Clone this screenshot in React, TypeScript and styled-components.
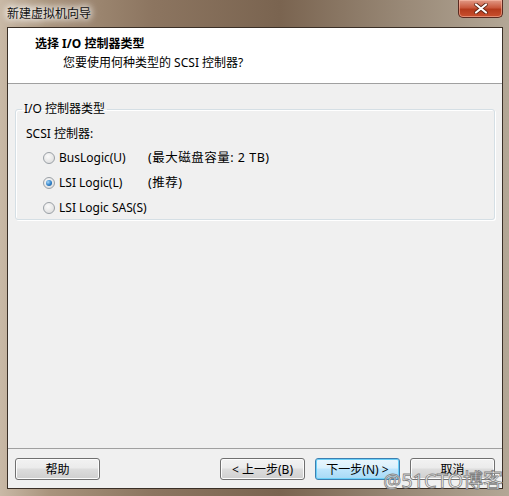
import React from 'react'
import styled, { createGlobalStyle } from 'styled-components'

const Global = createGlobalStyle`
  html, body {
    margin: 0;
    padding: 0;
    width: 509px;
    height: 496px;
    overflow: hidden;
    background: #6b5a4a;
  }
  * { box-sizing: border-box; }
`

const font = `"Noto Sans", "Noto Sans CJK SC", sans-serif`

const Window = styled.div`
  position: relative;
  width: 509px;
  height: 496px;
  display: flex;
  flex-direction: column;
  background: linear-gradient(90deg, #c9b9a6 0%, #a8937c 10%, #8c7560 30%, #7a6450 55%, #9a8a78 80%, #b3a796 100%);
  font-family: ${font};
`

const TitleBar = styled.div`
  height: 27px;
  display: flex;
  align-items: center;
  justify-content: space-between;
  padding: 0 6px 2px 7px;
`

const TitleText = styled.div`
  font-size: 12px;
  color: #111;
  text-shadow: 0 0 6px #fff, 0 0 8px #fff, 0 0 10px rgba(255, 255, 255, 0.9);
`

const CloseButton = styled.div`
  align-self: flex-start;
  width: 45px;
  height: 18px;
  border: 1px solid #5a2a20;
  border-top: none;
  border-radius: 0 0 5px 5px;
  background: linear-gradient(180deg, #e29a86 0%, #c9593d 45%, #b43a1c 55%, #c9502f 100%);
  display: flex;
  align-items: center;
  justify-content: center;
  box-shadow: inset 0 0 0 1px rgba(255, 200, 180, 0.5);
`

const Client = styled.div`
  flex: 1;
  margin: 0 6px 7px 7px;
  border: 1px solid #3a2f26;
  display: flex;
  flex-direction: column;
  background: #f0f0f0;
`

const Header = styled.div`
  height: 56px;
  background: #fff;
  border-bottom: 1px solid #a0a0a0;
  padding: 8px 0 0 27px;
`

const HeaderTitle = styled.div`
  font-size: 12px;
  font-weight: bold;
  color: #000;
  line-height: 16px;
`

const HeaderSub = styled.div`
  font-size: 12px;
  color: #000;
  line-height: 16px;
  margin: 3px 0 0 28px;
`

const Body = styled.div`
  flex: 1;
  padding: 18px 7px 0 7px;
`

const Group = styled.fieldset`
  margin: 0;
  height: 118px;
  border: 1px solid #d5dfe5;
  border-radius: 3px;
  padding: 0 0 0 10px;
  box-shadow: 1px 1px 0 #fff, inset 1px 1px 0 #fff;
`

const Legend = styled.legend`
  font-size: 12px;
  color: #000;
  padding: 0 2px 0 2px;
  margin-left: -4px;
  line-height: 14px;
`

const SubLabel = styled.div`
  font-size: 12px;
  color: #000;
  line-height: 16px;
  margin-top: 10px;
`

const Options = styled.div`
  display: grid;
  grid-template-columns: 105px auto;
  row-gap: 9px;
  margin: 8px 0 0 17px;
`

const Option = styled.label`
  display: flex;
  align-items: center;
  gap: 4px;
  font-size: 12px;
  color: #000;
  line-height: 16px;
`

const Note = styled.span`
  font-size: 12.5px;
  color: #000;
  line-height: 16px;
  letter-spacing: 0.5px;
`

const Radio = styled.span<{ $checked?: boolean }>`
  width: 12px;
  height: 12px;
  border-radius: 50%;
  border: 1px solid #9aa0a6;
  background: radial-gradient(circle at 40% 35%, #fafafa 0%, #e6e6e6 60%, #d8d8d8 100%);
  display: flex;
  align-items: center;
  justify-content: center;
  &::after {
    content: '';
    display: ${p => (p.$checked ? 'block' : 'none')};
    width: 6px;
    height: 6px;
    border-radius: 50%;
    background: radial-gradient(circle at 35% 35%, #a8d8f8 0%, #2d7fc8 55%, #1a4f8a 100%);
  }
`

const Footer = styled.div`
  border-top: 1px solid #a0a0a0;
  height: 40px;
  display: flex;
  align-items: center;
  padding: 0 7px 0 7px;
  gap: 10px;
`

const Spacer = styled.div`
  flex: 1;
`

const Button = styled.div<{ $focused?: boolean }>`
  width: 85px;
  height: 22px;
  border: 1px solid ${p => (p.$focused ? '#3c7fb1' : '#707070')};
  border-radius: 3px;
  background: ${p =>
    p.$focused
      ? 'linear-gradient(180deg, #eaf6fd 0%, #d9f0fc 45%, #bee6fd 50%, #a7d9f5 100%)'
      : 'linear-gradient(180deg, #f2f2f2 0%, #ebebeb 45%, #dddddd 50%, #cfcfcf 100%)'};
  box-shadow: inset 0 0 0 1px ${p => (p.$focused ? '#6bd0f8' : '#fcfcfc')};
  display: flex;
  align-items: center;
  justify-content: center;
  font-size: 12px;
  color: #000;
`

const Watermark = styled.div`
  position: absolute;
  right: 6px;
  bottom: 2px;
  font-family: "Noto Sans", "Noto Sans CJK SC", sans-serif;
  font-size: 20px;
  color: rgba(255, 255, 255, 0.85);
  -webkit-text-stroke: 0.8px #808080;
`

export default function App() {
  return (
    <>
      <Global />
      <Window>
        <TitleBar>
          <TitleText>新建虚拟机向导</TitleText>
          <CloseButton>
            <svg width="14" height="11" viewBox="0 0 14 11">
              <path d="M2 1.5 L12 9.5 M12 1.5 L2 9.5" stroke="#5a2010" strokeWidth="3.6" strokeLinecap="round" />
              <path d="M2 1.5 L12 9.5 M12 1.5 L2 9.5" stroke="#fff" strokeWidth="2.2" strokeLinecap="round" />
            </svg>
          </CloseButton>
        </TitleBar>
        <Client>
          <Header>
            <HeaderTitle>选择 I/O 控制器类型</HeaderTitle>
            <HeaderSub>您要使用何种类型的 SCSI 控制器?</HeaderSub>
          </Header>
          <Body>
            <Group>
              <Legend>I/O 控制器类型</Legend>
              <SubLabel>SCSI 控制器:</SubLabel>
              <Options>
                <Option><Radio />BusLogic(U)</Option>
                <Note>(最大磁盘容量: 2 TB)</Note>
                <Option><Radio $checked />LSI Logic(L)</Option>
                <Note>(推荐)</Note>
                <Option><Radio />LSI Logic SAS(S)</Option>
                <span />
              </Options>
            </Group>
          </Body>
          <Footer>
            <Button>帮助</Button>
            <Spacer />
            <Button>&lt; 上一步(B)</Button>
            <Button $focused>下一步(N) &gt;</Button>
            <Button>取消</Button>
          </Footer>
        </Client>
        <Watermark>@51CTO博客</Watermark>
      </Window>
    </>
  )
}
